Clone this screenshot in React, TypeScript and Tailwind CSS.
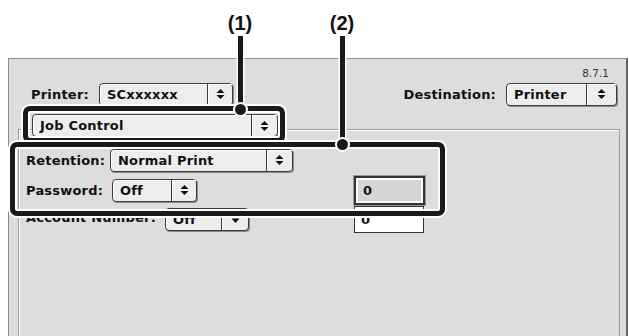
const LABEL = "font-['DejaVu_Sans',sans-serif] font-bold text-[13px] leading-none text-[#111] tracking-[0.2px]";

function Arrows({ single = false }: { single?: boolean }) {
  if (single) {
    return (
      <svg width="9" height="11" viewBox="0 0 9 11">
        <path d="M0.5 4.5 H8.5 L4.5 9 Z" fill="#111" />
      </svg>
    );
  }
  return (
    <svg width="9" height="12" viewBox="0 0 9 12">
      <path d="M0.5 5 H8.5 L4.5 1 Z" fill="#111" />
      <path d="M0.5 7 H8.5 L4.5 11 Z" fill="#111" />
    </svg>
  );
}

function Popup({ label, w, arrowW = 25, single = false }: { label: string; w: string; arrowW?: number; single?: boolean }) {
  return (
    <div
      className={`${w} h-[23px] flex rounded-[4px] border border-[#3c3c3c] bg-[#ededed] shadow-[1px_1px_0_#8a8a8a,inset_1px_1px_0_#fff]`}
    >
      <div className={`flex-1 flex items-center pl-[7px] ${LABEL}`}>{label}</div>
      <div
        className="flex items-center justify-center border-l border-[#3c3c3c] shadow-[inset_1px_1px_0_#fff]"
        style={{ width: arrowW }}
      >
        <Arrows single={single} />
      </div>
    </div>
  );
}

function Callout({ n, cx, lineTo }: { n: string; cx: number; lineTo: number }) {
  return (
    <>
      <div
        className="absolute top-[12px] w-[40px] -ml-[20px] text-center font-['Liberation_Sans',Arial,sans-serif] font-bold text-[20px] leading-[22px] text-[#111]"
        style={{ left: cx }}
      >
        {n}
      </div>
      <div
        className="absolute top-[36px] w-[5px] -ml-[2.5px] bg-[#1a1a1a] shadow-[0_0_0_1.5px_#fff]"
        style={{ left: cx, height: lineTo - 36 }}
      />
      <div
        className="absolute w-[11px] h-[11px] -ml-[5.5px] -mt-[5.5px] rounded-full bg-[#1a1a1a] shadow-[0_0_0_2px_#fff]"
        style={{ left: cx, top: lineTo }}
      />
    </>
  );
}

export default function App() {
  return (
    <div className="relative w-[629px] h-[336px] overflow-hidden bg-white">
      <div className="pt-[58px] pl-[8px]">
        {/* dialog window */}
        <div className="w-[620px] h-[278px] bg-[#dddddd] border-t border-l border-[#8c8c8c] border-r-[2px] border-r-[#666] flex flex-col">
          <div className="flex justify-end pr-[17px] pt-[8px] font-['DejaVu_Sans',sans-serif] text-[10.5px] leading-[12px] text-[#333]">
            8.7.1
          </div>
          <div className="flex items-center h-[24px] mt-[3px] pl-[22px] pr-[9px]">
            <div className={`w-[68px] ${LABEL}`}>Printer:</div>
            <Popup label="SCxxxxxx" w="w-[134px]" />
            <div className="flex-1" />
            <div className={`mr-[10px] ${LABEL}`}>Destination:</div>
            <Popup label="Printer" w="w-[111px]" arrowW={30} />
          </div>

          {/* group box */}
          <div className="ml-[9px] mr-[6px] mt-[23px] flex-1 border border-b-0 border-[#9a9a9a] shadow-[inset_1px_1px_0_#fff]">
            <div className="-mt-[16px] ml-[13px]">
              <Popup label="Job Control" w="w-[246px]" arrowW={26} />
            </div>
            <div className="mt-[11px] flex flex-col">
              <div className="flex items-center h-[24px] pl-[7px]">
                <div className={`w-[84px] ${LABEL}`}>Retention:</div>
                <Popup label="Normal Print" w="w-[183px]" arrowW={26} />
              </div>
              <div className="flex items-center h-[24px] mt-[6px] pl-[7px]">
                <div className="w-[328px] flex items-center">
                  <div className={`w-[86px] ${LABEL}`}>Password:</div>
                  <Popup label="Off" w="w-[85px]" />
                </div>
                <div className="w-[71px] h-[29px] border-2 border-[#333] shadow-[0_0_0_1px_#9a9a9a] p-[2px] bg-white">
                  <div className={`h-full bg-[#d6d6d6] flex items-center pl-[5px] ${LABEL}`}>0</div>
                </div>
              </div>
              <div className="flex items-center h-[24px] mt-[5px] pl-[7px]">
                <div className="w-[328px] flex items-center">
                  <div className={`w-[139px] -translate-y-[2px] ${LABEL}`}>Account Number:</div>
                  <Popup label="Off" w="w-[84px]" arrowW={27} single />
                </div>
                <div className={`w-[70px] h-[27px] border border-[#333] bg-white flex items-center pl-[6px] ${LABEL}`}>0</div>
              </div>
            </div>
          </div>
        </div>
      </div>

      {/* callout boxes */}
      <div className="absolute left-[23px] top-[106px] w-[262px] h-[37px] rounded-[7px] border-[5px] border-[#1a1a1a] shadow-[0_0_0_2px_#fff,inset_0_0_0_2px_#fff]" />
      <div className="absolute left-[10px] top-[142px] w-[435px] h-[74px] rounded-[7px] border-[5px] border-[#1a1a1a] shadow-[0_0_0_2px_#fff,inset_0_0_0_2px_#fff]" />
      <Callout n="(1)" cx={240} lineTo={109} />
      <Callout n="(2)" cx={342} lineTo={144} />
    </div>
  );
}
